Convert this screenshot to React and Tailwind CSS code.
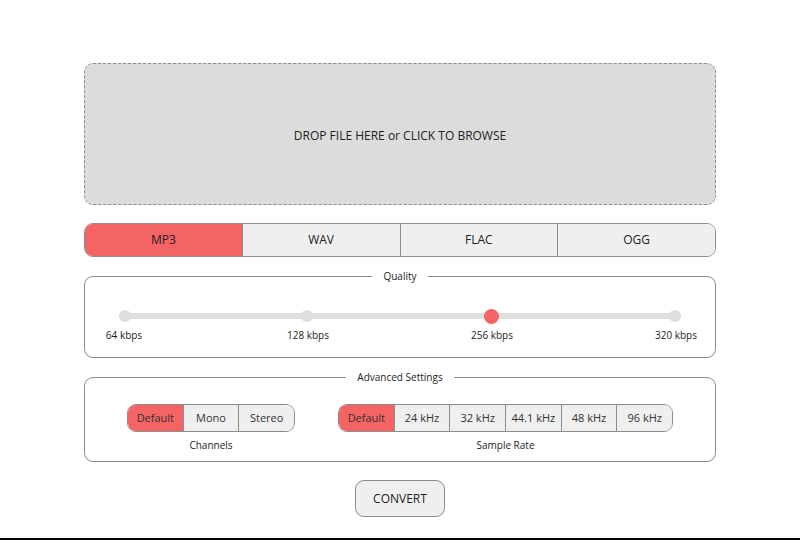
import { useState } from 'react'

const FORMATS = ['MP3', 'WAV', 'FLAC', 'OGG']
const BITRATES = ['64 kbps', '128 kbps', '256 kbps', '320 kbps']
const CHANNELS = ['Default', 'Mono', 'Stereo']
const RATES = ['Default', '24 kHz', '32 kHz', '44.1 kHz', '48 kHz', '96 kHz']

function Segmented({ options, value, onChange, width }) {
  return (
    <div className={`flex h-[28px] rounded-[9px] border border-[#8c8c8c] overflow-hidden ${width}`}>
      {options.map((opt, i) => (
        <button key={opt} onClick={() => onChange(i)}
          className={`flex-1 text-[11px] text-[#333] ${i > 0 ? 'border-l border-[#8c8c8c]' : ''} ${
            value === i ? 'bg-[#f46464]' : 'bg-[#efefef]'}`}>
          {opt}
        </button>
      ))}
    </div>
  )
}

export default function App() {
  const [format, setFormat] = useState(0)
  const [quality, setQuality] = useState(2)
  const [channel, setChannel] = useState(0)
  const [rate, setRate] = useState(0)

  return (
    <div className="w-[800px] h-[540px] bg-white flex flex-col items-center text-[#222] border-b-2 border-black"
      style={{ fontFamily: '"Open Sans", "Noto Sans", sans-serif' }}>
      <div className="w-[632px] mt-[63px] flex flex-col">
        <div className="h-[142px] rounded-[9px] border border-dashed border-[#8c8c8c] bg-[#dcdcdc] flex items-center justify-center pt-[3px] text-[12px] cursor-pointer">
          DROP FILE HERE or CLICK TO BROWSE
        </div>

        <div className="mt-[18px] h-[34px] flex rounded-[9px] border border-[#8c8c8c] overflow-hidden">
          {FORMATS.map((f, i) => (
            <button key={f} onClick={() => setFormat(i)}
              className={`flex-1 text-[12px] ${i > 0 ? 'border-l border-[#8c8c8c]' : ''} ${
                format === i ? 'bg-[#f46464]' : 'bg-[#efefef]'}`}>
              {f}
            </button>
          ))}
        </div>

        <fieldset className="mt-[12px] h-[89px] rounded-[9px] border border-[#8c8c8c] px-[20px]">
          <legend className="mx-auto px-[11px] text-[10px] leading-[14px]">Quality</legend>
          <div className="relative mt-[26px] h-[14px] mx-[14px] flex items-center">
            <div className="absolute inset-x-0 h-[6px] rounded-full bg-[#dedede]" />
            <div className="relative w-full flex justify-between items-center">
              {BITRATES.map((b, i) => (
                <button key={b} onClick={() => setQuality(i)}
                  className={`rounded-full ${quality === i ? 'w-[15px] h-[15px] bg-[#f46464]' : 'w-[12px] h-[12px] bg-[#dedede]'}`} />
              ))}
            </div>
          </div>
          <div className="mt-[5px] -mx-[5px] flex justify-between text-[10px]">
            {BITRATES.map(b => <span key={b} className="w-[48px] text-center">{b}</span>)}
          </div>
        </fieldset>

        <fieldset className="mt-[12px] h-[92px] rounded-[9px] border border-[#8c8c8c]">
          <legend className="mx-auto px-[11px] text-[10px] leading-[14px]">Advanced Settings</legend>
          <div className="mt-[20px] flex justify-center gap-[43px]">
            <div className="flex flex-col items-center">
              <Segmented options={CHANNELS} value={channel} onChange={setChannel} width="w-[168px]" />
              <span className="mt-[6px] text-[10px]">Channels</span>
            </div>
            <div className="flex flex-col items-center">
              <Segmented options={RATES} value={rate} onChange={setRate} width="w-[335px]" />
              <span className="mt-[6px] text-[10px]">Sample Rate</span>
            </div>
          </div>
        </fieldset>

        <button className="mt-[18px] self-center w-[90px] h-[37px] rounded-[9px] border border-[#8c8c8c] bg-[#efefef] text-[12px]">
          CONVERT
        </button>
      </div>
    </div>
  )
}
